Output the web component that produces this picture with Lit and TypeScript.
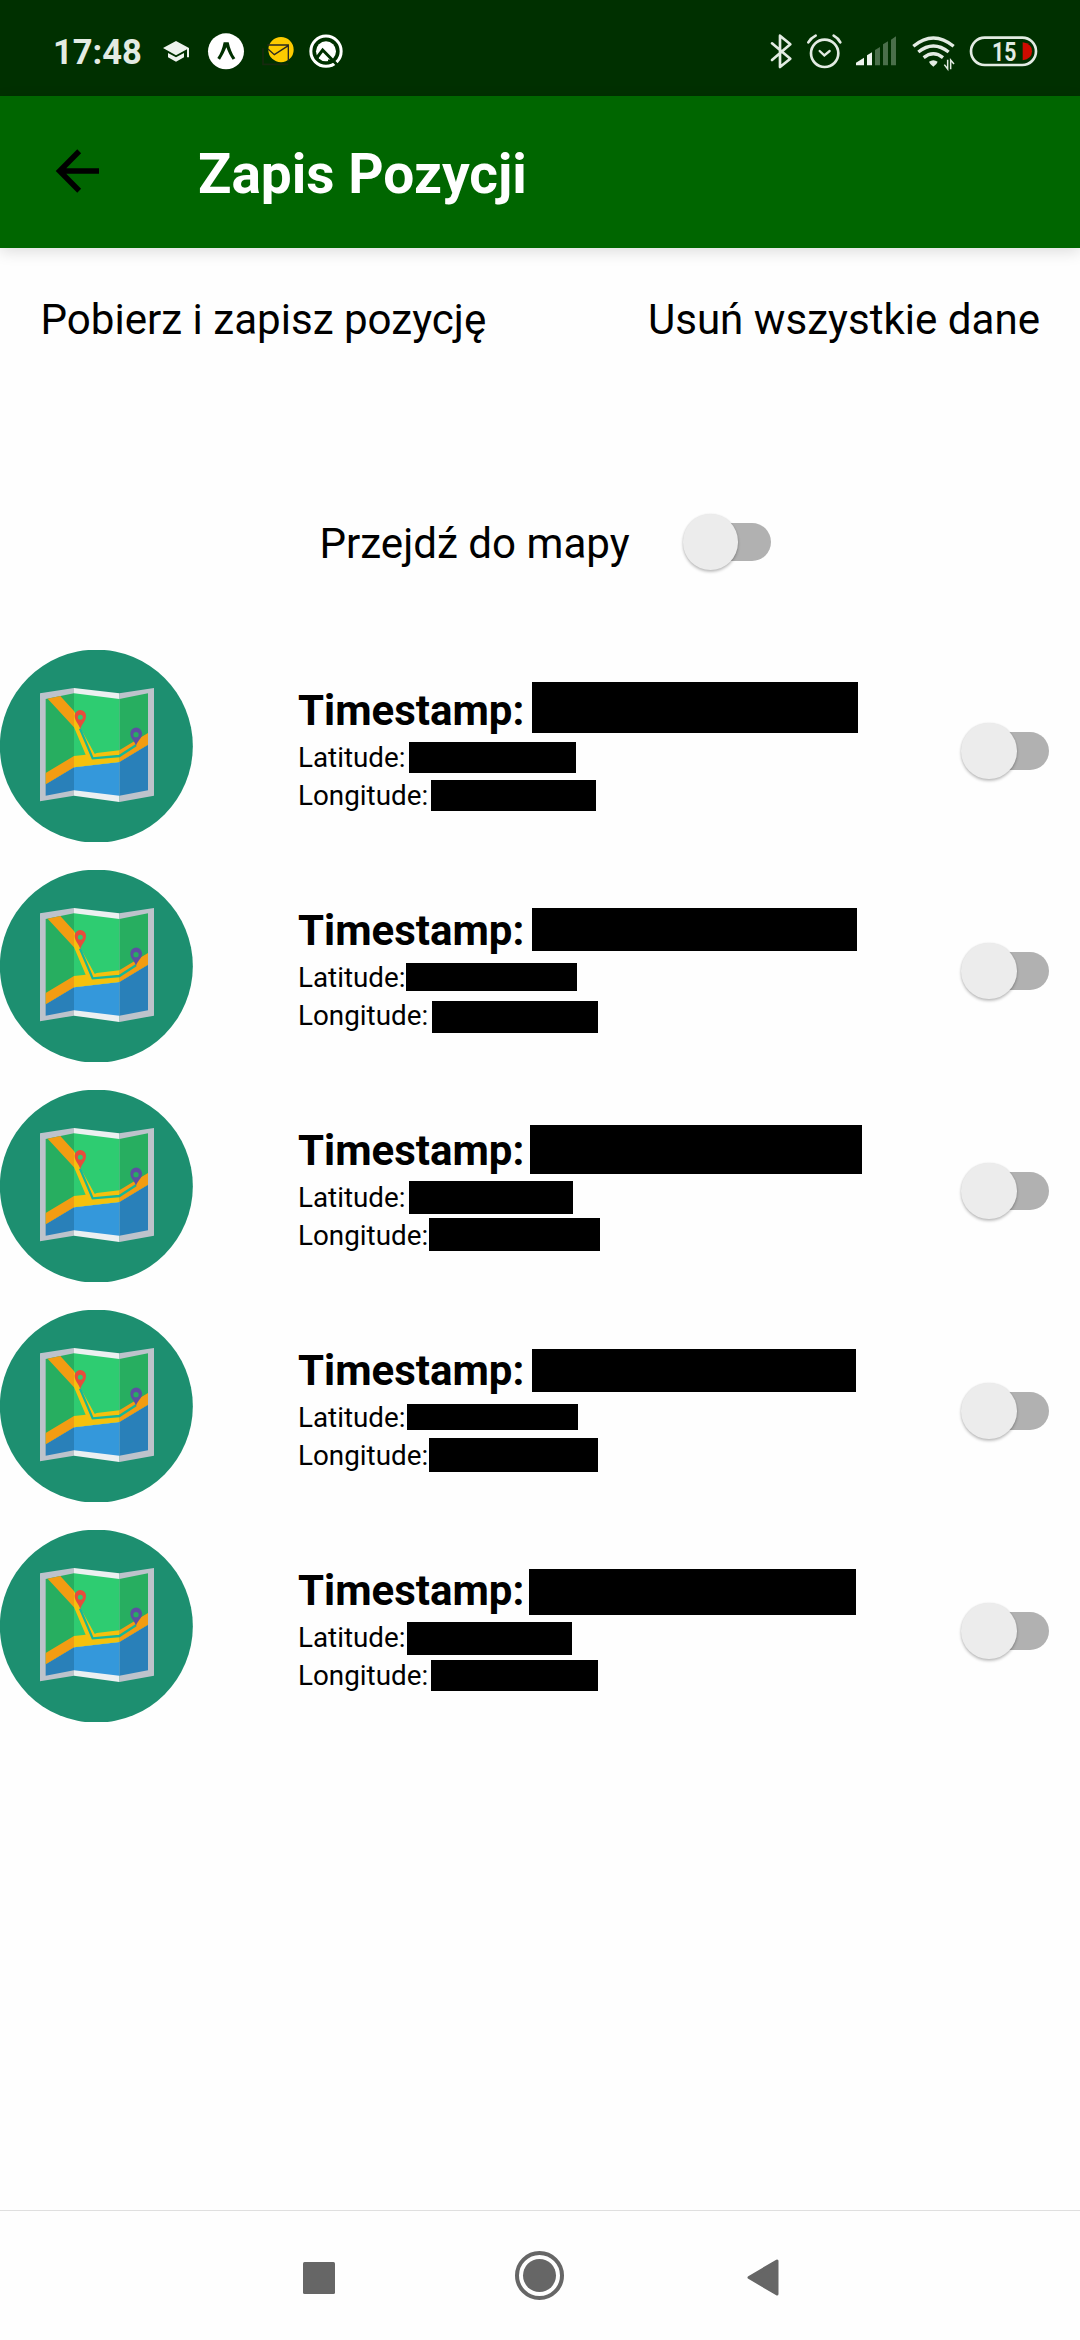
import { LitElement, html, svg, css, TemplateResult } from "lit";
import { customElement, property } from "lit/decorators.js";
import { styleMap } from "lit/directives/style-map.js";

/** x, y (from the row's top), width, height */
type Mask = [number, number, number, number];

const RECORDS: Mask[][] = [
  [[532, 32, 326, 51], [409, 92, 167, 31], [431, 130, 165, 31]],
  [[532, 38, 325, 43], [406, 93, 171, 28], [432, 131, 166, 32]],
  [[530, 35, 332, 49], [409, 91, 164, 33], [429, 128, 171, 33]],
  [[532, 39, 324, 43], [407, 94, 171, 26], [429, 128, 169, 34]],
  [[529, 39, 327, 46], [407, 92, 165, 33], [431, 130, 167, 31]],
];

// Icons are drawn at three units per pixel.
const icon = (x: number, width: number, body: TemplateResult) => html`
  <svg width=${width / 3} height="40" viewBox="${x} 95 ${width} 120">${body}</svg>
`;

@customElement("status-bar")
class StatusBar extends LitElement {
  static styles = css`
    :host {
      display: flex;
      justify-content: space-between;
      height: 96px;
      box-sizing: border-box;
      padding: 31.67px 36.67px 0 53px;
      background: #003000;
      font-family: Roboto, "Noto Sans", sans-serif;
    }
    .group { display: flex; height: 40px; }
    .time {
      width: 107px;
      font-size: 34.500px;
      font-weight: 700;
      line-height: 41px;
      color: #e3ebe3;
    }
    svg { display: block; flex: none; }
    .level { font: 700 75px Roboto, sans-serif; fill: #e3ebe3; }
  `;

  render() {
    return html`
      <div class="group">
        <div class="time">17:48</div>
        ${icon(480, 120, svg`
          <path fill="#eef3ee" d="M489 143L528 122L567 143V171H561V147L528 165ZM504 158L528 171L552 158V171L528 184L504 171Z"/>`)}
        ${icon(600, 160, svg`
          <circle cx="678" cy="153" r="54" fill="#fff"/>
          <path fill="#003000" d="M671 126H686C690 145 696 160 706 174L698 178C690 168 684 154 679 141C674 154 667 168 660 178L652 173C662 160 667 145 671 126Z"/>`)}
        ${icon(760, 155, svg`
          <circle cx="844" cy="148" r="38" fill="#fdcb00"/>
          <path fill="none" stroke="#2b2a20" stroke-width="4" d="M803 134H866V181M805 146L824 163L866 136"/>
          <path fill="none" stroke="#17290f" stroke-width="5" d="M790 144V192H866"/>`)}
        ${icon(915, 130, svg`
          <circle cx="978" cy="152.500" r="45.500" fill="none" stroke="#fff" stroke-width="9"/>
          <circle cx="978" cy="153" r="30" fill="#fff"/>
          <path fill="none" stroke="#003000" stroke-width="9" d="M950 173L968 149L1012 194"/>
          <path fill="none" stroke="#003000" stroke-width="5" d="M984 180H1001"/>`)}
      </div>
      <div class="group">
        ${icon(80, 110, svg`
          <path fill="none" stroke="#e3ebe3" stroke-width="8" stroke-linejoin="round" stroke-linecap="round" d="M95 129L150 175L119 200V106L150 132L95 179"/>`)}
        ${icon(190, 140, svg`
          <g fill="none" stroke="#e3ebe3" stroke-width="8" stroke-linecap="round">
            <circle cx="255" cy="159" r="41"/>
            <path d="M240 152L254 165L270 152" stroke-width="7"/>
            <path d="M206 126Q214 113 228 106M282 106Q295 113 302 126"/>
          </g>`)}
        ${icon(330, 170, svg`
          <path fill="#eef3ee" d="M348 195V187L372 172V195ZM381 195V165L396 156V195Z"/>
          <path fill="#4a6f4a" d="M405 195V149L420 140V195ZM429 195V132L444 123V195ZM453 195V118L468 108V195Z"/>`)}
        ${icon(500, 170, svg`
          <g fill="none" stroke="#e3ebe3" stroke-width="10">
            <path d="M519 138Q579 88 640 138"/>
            <path d="M534 155Q579 119 625 155"/>
            <path d="M550 172Q579 149 608 172"/>
          </g>
          <path fill="#e3ebe3" d="M566 184Q579 175 592 184Q589 193 579 199Q569 193 566 184Z"/>
          <path fill="none" stroke="#e3ebe3" stroke-width="4.500" d="M622 178V206L612 193M631 207V179L641 191"/>`)}
        ${icon(670, 240, svg`
          <rect x="694" y="112" width="195" height="82" rx="41" fill="none" stroke="#e3ebe3" stroke-width="8"/>
          <path fill="#d00b00" d="M849 126Q877 130 877 153Q877 176 849 180Z"/>
          <text class="level" x="757" y="181" textLength="73" lengthAdjust="spacingAndGlyphs">15</text>`)}
      </div>
    `;
  }
}

@customElement("toggle-switch")
class ToggleSwitch extends LitElement {
  static styles = css`
    :host { display: block; width: 88px; height: 56px; }
    .track {
      display: flex;
      align-items: center;
      width: 80px;
      height: 38px;
      margin: 9px 0 0 8px;
      border-radius: 19px;
      background: #b1b1b1;
    }
    .thumb {
      flex: none;
      width: 55.500px;
      height: 55.500px;
      margin-left: -8px;
      border-radius: 50%;
      background: #ececec;
      box-shadow: 0 2px 3px rgba(0, 0, 0, 0.24), 0 0 2px rgba(0, 0, 0, 0.1);
    }
  `;

  render() {
    return html`<div class="track"><div class="thumb"></div></div>`;
  }
}

@customElement("map-badge")
class MapBadge extends LitElement {
  static styles = css`
    :host { display: block; width: 193px; height: 192px; }
    svg { display: block; }
  `;

  render() {
    return html`
      <svg width="193" height="192" viewBox="0 60 579 576">
        <circle cx="289" cy="348.500" r="289.500" fill="#1d8f70"/>
        <path fill="#bdc3cb" d="M120 190L222 174V497L120 514ZM358 190L462 174V497L358 516Z"/>
        <path fill="#ecf0f1" d="M222 174L358 190V516L222 497Z"/>
        <path fill="#27ae60" d="M137 207L222 190V412L137 463ZM358 207L444 190V344L358 396Z"/>
        <path fill="#2ecc71" d="M222 190L358 207V396L222 412Z"/>
        <path fill="#2980b9" d="M137 463L222 412V481L137 497ZM358 396L444 344V481L358 497Z"/>
        <path fill="#3498db" d="M222 412L358 396V497L222 481Z"/>
        <path fill="#f39c12" d="M137 429L222 378V412L137 463ZM358 361L444 309V344L358 396ZM143 206L181 198L222 243V292Z"/>
        <path fill="#f5c10e" d="M222 378L257 374L222 292V243L284 370L358 361V396L222 412Z"/>
        <path fill="#2ecc71" d="M236 262L289 370L284 371L236 285Z"/>
        <path fill="none" stroke="#16b897" stroke-width="7" d="M240 296L278 385L358 378L408 346"/>
        <path fill="#e74c3c" fill-rule="evenodd" d="M241 298C238 281 224 275 224 257A17 17 0 0 1 258 257C258 275 244 281 241 298ZM241 254A7.500 7.500 0 1 0 241 269A7.500 7.500 0 1 0 241 254Z"/>
        <path fill="#5d4fa2" fill-rule="evenodd" d="M408 348C405 333 391 327 391 310A17.500 17.500 0 0 1 426 310C426 327 411 333 408 348ZM408 306A8 8 0 1 0 408 322A8 8 0 1 0 408 306Z"/>
      </svg>
    `;
  }
}

@customElement("position-row")
class PositionRow extends LitElement {
  @property({ attribute: false }) masks: Mask[] = [];

  static styles = css`
    :host {
      display: flex;
      position: relative;
      height: 220px;
      box-sizing: border-box;
      padding-right: 31px;
    }
    .details { flex: 1; margin-left: 105px; padding-top: 32.500px; }
    .stamp { font-size: 42px; font-weight: 700; line-height: 56px; }
    .coord { font-size: 27.800px; line-height: 38px; }
    toggle-switch { margin-top: 73px; }
    .mask { position: absolute; background: #000; }
  `;

  render() {
    return html`
      <map-badge></map-badge>
      <div class="details">
        <div class="stamp">Timestamp:</div>
        <div class="coord">Latitude:</div>
        <div class="coord">Longitude:</div>
      </div>
      <toggle-switch></toggle-switch>
      ${this.masks.map(([x, y, w, h]) => html`
        <div class="mask" style=${styleMap({ left: `${x}px`, top: `${y}px`, width: `${w}px`, height: `${h}px` })}></div>
      `)}
    `;
  }
}

@customElement("app-root")
class AppRoot extends LitElement {
  static styles = css`
    :host {
      display: flex;
      flex-direction: column;
      width: 1080px;
      height: 2340px;
      overflow: hidden;
      background: #fefefe;
      color: #000;
      font-family: Roboto, "Noto Sans", sans-serif;
    }
    svg { display: block; }
    .header {
      display: flex;
      align-items: center;
      height: 152px;
      box-sizing: border-box;
      padding-left: 54px;
      background: #006600;
      box-shadow: 0 4px 14px rgba(0, 0, 0, 0.13);
    }
    .back { margin-top: -2px; }
    .title {
      margin: 4px 0 0 96px;
      font-size: 55px;
      font-weight: 700;
      line-height: 72px;
      color: #fff;
    }
    .actions {
      display: flex;
      justify-content: space-between;
      align-items: center;
      height: 143px;
      padding: 0 40px 0 40.500px;
    }
    .action { font-size: 42.100px; line-height: 56px; }
    .map-link {
      display: flex;
      align-items: flex-start;
      margin: 99px 0 52px;
      height: 108px;
      box-sizing: border-box;
      padding: 26px 0 0 319.500px;
    }
    .map-link toggle-switch { margin: -2px 0 0 auto; }
    .map-label { width: 363px; }
    .list { flex: 1; }
    .nav {
      display: flex;
      align-items: center;
      height: 130px;
      box-sizing: border-box;
      border-top: 1px solid #dfdfdf;
      padding: 4px 0 0 303px;
    }
    .home { margin: -5px 183px 0 180px; }
  `;

  render() {
    return html`
      <status-bar></status-bar>
      <div class="header">
        <svg class="back" width="48" height="48" viewBox="54 147 48 48">
          <path fill="none" stroke="#000" stroke-width="5.500" d="M99 171H60M79.200 151.300L59.600 171L79.200 190.700"/>
        </svg>
        <div class="title">Zapis Pozycji</div>
      </div>
      <div class="actions">
        <div class="action">Pobierz i zapisz pozycję</div>
        <div class="action">Usuń wszystkie dane</div>
      </div>
      <div class="map-link">
        <div class="action map-label">Przejdź do mapy</div>
        <div><toggle-switch></toggle-switch></div>
      </div>
      <div class="list">
        ${RECORDS.map((masks) => html`<position-row .masks=${masks}></position-row>`)}
      </div>
      <div class="nav">
        <svg width="32" height="32" viewBox="0 0 32 32"><rect width="32" height="32" rx="1.500" fill="#666"/></svg>
        <svg class="home" width="49" height="49" viewBox="0 0 49 49">
          <circle cx="24.500" cy="24.500" r="22.500" fill="none" stroke="#666" stroke-width="4"/>
          <circle cx="24.500" cy="24.500" r="16.500" fill="#666"/>
        </svg>
        <svg width="32" height="37" viewBox="0 0 32 37">
          <path fill="#666" stroke="#666" stroke-width="3" stroke-linejoin="round" d="M2 18.500L30 2V35Z"/>
        </svg>
      </div>
    `;
  }
}
